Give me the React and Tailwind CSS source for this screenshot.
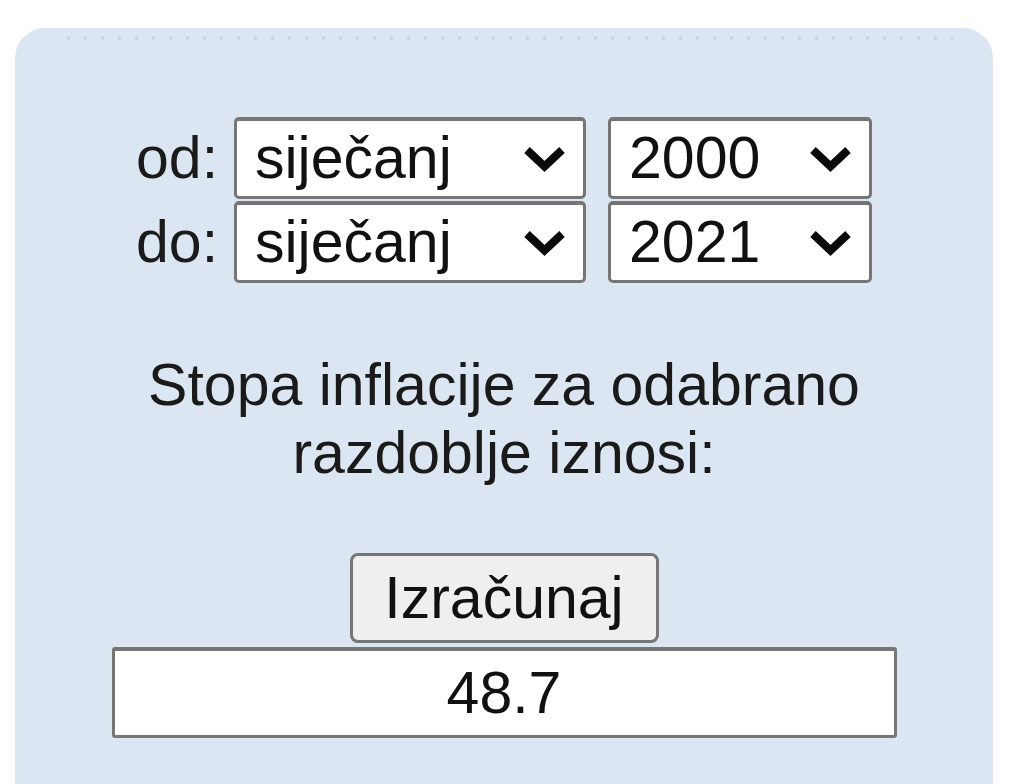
import React from "react";

function Chevron() {
  return (
    <svg width="45" height="28" viewBox="0 0 45 28" className="shrink-0">
      <polyline
        points="5,5 22.5,21.5 40,5"
        fill="none"
        stroke="#0a0a0a"
        strokeWidth="8"
        strokeLinejoin="miter"
        strokeLinecap="butt"
      />
    </svg>
  );
}

function FakeSelect({ value, w }) {
  return (
    <div
      className={`${w} h-[82px] bg-white border-[3px] border-t-4 border-[#767676] rounded-[5px] flex items-center justify-between pl-[18px] pr-[16px]`}
    >
      <span className="text-[59px] leading-none text-[#111]">{value}</span>
      <Chevron />
    </div>
  );
}

export default function App() {
  return (
    <div
      className="w-[1024px] h-[784px] bg-white pt-[28px] overflow-hidden"
      style={{ fontFamily: '"Liberation Sans", Arial, sans-serif' }}
    >
      <div className="ml-[15px] w-[978px] h-[756px] rounded-t-[30px] bg-[#dbe6f2] pt-[8px] flex flex-col items-center">
        <div className="self-start ml-[45px] w-[893px] h-[4px] bg-[radial-gradient(circle,#c4d3e6_1.5px,transparent_2px)] bg-[length:17px_4px]" />

        <div className="mt-[77px] flex flex-col gap-[2px]">
          <div className="flex items-center">
            <span className="w-[78px] text-[59px] leading-none text-[#1a1a1a]">od:</span>
            <div className="ml-[20px]">
              <FakeSelect value="siječanj" w="w-[352px]" />
            </div>
            <div className="ml-[22px]">
              <FakeSelect value="2000" w="w-[264px]" />
            </div>
          </div>
          <div className="flex items-center">
            <span className="w-[78px] text-[59px] leading-none text-[#1a1a1a]">do:</span>
            <div className="ml-[20px]">
              <FakeSelect value="siječanj" w="w-[352px]" />
            </div>
            <div className="ml-[22px]">
              <FakeSelect value="2021" w="w-[264px]" />
            </div>
          </div>
        </div>

        <p className="mt-[68px] text-center text-[59px] leading-[68px] text-[#1a1a1a]">
          Stopa inflacije za odabrano
          <br />
          razdoblje iznosi:
        </p>

        <div className="mt-[66px] w-[309px] h-[90px] bg-[#efefef] border-[3px] border-[#767676] rounded-[8px] flex items-center justify-center">
          <span className="text-[59px] leading-none text-[#111]">Izračunaj</span>
        </div>

        <div className="mt-[4px] w-[785px] h-[91px] bg-white border-[3px] border-t-4 border-[#767676] rounded-[3px] flex items-center justify-center">
          <span className="text-[59px] leading-none text-[#111]">48.7</span>
        </div>
      </div>
    </div>
  );
}
